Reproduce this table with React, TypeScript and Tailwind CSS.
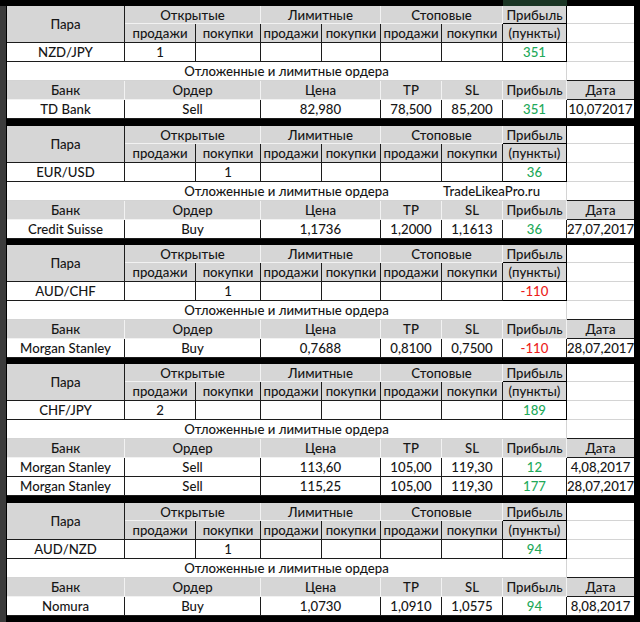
import React from 'react';

type OrderRow = {
  bank: string;
  order: string;
  price: string;
  tp: string;
  sl: string;
  profit: string;
  date: string;
};

type PairBlock = {
  pair: string;
  open: string[]; // продажи/покупки x3 (B..G)
  profit: string;
  orders: OrderRow[];
  watermark?: boolean;
};

const blocks: PairBlock[] = [
  {
    pair: 'NZD/JPY',
    open: ['1', '', '', '', '', ''],
    profit: '351',
    orders: [{ bank: 'TD Bank', order: 'Sell', price: '82,980', tp: '78,500', sl: '85,200', profit: '351', date: '10,072017' }],
  },
  {
    pair: 'EUR/USD',
    open: ['', '1', '', '', '', ''],
    profit: '36',
    watermark: true,
    orders: [{ bank: 'Credit Suisse', order: 'Buy', price: '1,1736', tp: '1,2000', sl: '1,1613', profit: '36', date: '27,07,2017' }],
  },
  {
    pair: 'AUD/CHF',
    open: ['', '1', '', '', '', ''],
    profit: '-110',
    orders: [{ bank: 'Morgan Stanley', order: 'Buy', price: '0,7688', tp: '0,8100', sl: '0,7500', profit: '-110', date: '28,07,2017' }],
  },
  {
    pair: 'CHF/JPY',
    open: ['2', '', '', '', '', ''],
    profit: '189',
    orders: [
      { bank: 'Morgan Stanley', order: 'Sell', price: '113,60', tp: '105,00', sl: '119,30', profit: '12', date: '4,08,2017' },
      { bank: 'Morgan Stanley', order: 'Sell', price: '115,25', tp: '105,00', sl: '119,30', profit: '177', date: '28,07,2017' },
    ],
  },
  {
    pair: 'AUD/NZD',
    open: ['', '1', '', '', '', ''],
    profit: '94',
    orders: [{ bank: 'Nomura', order: 'Buy', price: '1,0730', tp: '1,0910', sl: '1,0575', profit: '94', date: '8,08,2017' }],
  },
];

const cell = 'flex items-center justify-center whitespace-nowrap pt-[2px]';
const head = 'bg-[#d6d6d6]';
const darkR = 'border-r border-[#1c1c1c]';
const darkB = 'border-b border-[#1c1c1c]';
const lightR = 'border-r border-[#f2f2f2]';
const lightB = 'border-b border-[#f2f2f2]';
const gridB = 'border-b border-[#d4d4d4]';

const profitColor = (v: string) => (v.startsWith('-') ? 'text-[#ec1c1c]' : 'text-[#22a95a]');

function Block({ b }: { b: PairBlock }) {
  const rows =
    b.orders.length > 1
      ? 'grid-rows-[18px_19px_19px_19px_19px_19px_19px]'
      : 'grid-rows-[18px_19px_19px_19px_19px_19px]';

  return (
    <div
      className={`grid grid-cols-[118px_71px_65px_61px_59px_61px_61px_64px_67px] ${rows} border-l border-black bg-white`}
    >
      {/* row 1 */}
      <div className={`${cell} ${head} row-span-2 ${darkR} ${darkB}`}>Пара</div>
      <div className={`${cell} ${head} col-span-2 ${lightR} ${lightB}`}>Открытые</div>
      <div className={`${cell} ${head} col-span-2 ${lightR} ${lightB}`}>Лимитные</div>
      <div className={`${cell} ${head} col-span-2 ${lightR} ${lightB}`}>Стоповые</div>
      <div className={`${cell} ${head} border-r border-black ${lightB}`}>Прибыль</div>
      <div className={`${cell} ${gridB}`} />

      {/* row 2 */}
      {['продажи', 'покупки', 'продажи', 'покупки', 'продажи', 'покупки'].map((t, i) => (
        <div key={i} className={`${cell} ${head} ${darkR} ${darkB}`}>
          {t}
        </div>
      ))}
      <div className={`${cell} ${head} border-r border-black ${darkB}`}>(пункты)</div>
      <div className={`${cell} ${gridB}`} />

      {/* row 3 */}
      <div className={`${cell} ${darkR} ${darkB}`}>{b.pair}</div>
      {b.open.map((v, i) => (
        <div key={i} className={`${cell} ${darkR} ${darkB}`}>
          {v}
        </div>
      ))}
      <div className={`${cell} border-r border-black ${darkB} ${profitColor(b.profit)}`}>{b.profit}</div>
      <div className={`${cell} ${gridB}`} />

      {/* row 4 */}
      <div className={`${cell} relative col-span-8 border-r border-[#d4d4d4] ${darkB}`}>
        Отложенные и лимитные ордера
        {b.watermark && (
          <span className="absolute left-[436px] top-0 flex h-full items-center pt-[2px]">TradeLikeaPro.ru</span>
        )}
      </div>
      <div className={`${cell} ${darkB}`} />

      {/* row 5 */}
      <div className={`${cell} ${head} ${lightR} ${darkB}`}>Банк</div>
      <div className={`${cell} ${head} col-span-2 ${lightR} ${darkB}`}>Ордер</div>
      <div className={`${cell} ${head} col-span-2 ${lightR} ${darkB}`}>Цена</div>
      <div className={`${cell} ${head} ${lightR} ${darkB}`}>TP</div>
      <div className={`${cell} ${head} ${lightR} ${darkB}`}>SL</div>
      <div className={`${cell} ${head} ${lightR} ${darkB}`}>Прибыль</div>
      <div className={`${cell} ${head} ${darkB}`}>Дата</div>

      {/* orders */}
      {b.orders.map((o, i) => (
        <React.Fragment key={i}>
          <div className={`${cell} ${darkR} ${darkB}`}>{o.bank}</div>
          <div className={`${cell} col-span-2 ${darkR} ${darkB}`}>{o.order}</div>
          <div className={`${cell} col-span-2 ${darkR} ${darkB}`}>{o.price}</div>
          <div className={`${cell} ${darkR} ${darkB}`}>{o.tp}</div>
          <div className={`${cell} ${darkR} ${darkB}`}>{o.sl}</div>
          <div className={`${cell} ${darkR} ${darkB} ${profitColor(o.profit)}`}>{o.profit}</div>
          <div className={`${cell} ${darkB}`}>{o.date}</div>
        </React.Fragment>
      ))}
    </div>
  );
}

export default function App() {
  return (
    <div className="flex h-[622px] w-[640px] flex-col overflow-hidden bg-black font-['Lato','Open_Sans',sans-serif] text-[13.2px] font-medium leading-none text-[#161616]">
      {/* top band with selected column tint */}
      <div className="flex h-[6px] shrink-0">
        <div className="w-[503px] bg-black" />
        <div className="w-[64px] bg-[#1a3524]" />
        <div className="flex-1 bg-black" />
      </div>

      <div className="flex flex-1">
        <div className="w-[6px] bg-[#3b3b3b]" />
        <div className="flex w-[628px] flex-col">
          <Block b={blocks[0]} />
          <div className="h-[7px]" />
          <Block b={blocks[1]} />
          <div className="h-[6px]" />
          <Block b={blocks[2]} />
          <div className="h-[6px]" />
          <Block b={blocks[3]} />
          <div className="h-[7px]" />
          <Block b={blocks[4]} />
        </div>
        <div className="w-[6px] bg-black" />
      </div>
    </div>
  );
}
